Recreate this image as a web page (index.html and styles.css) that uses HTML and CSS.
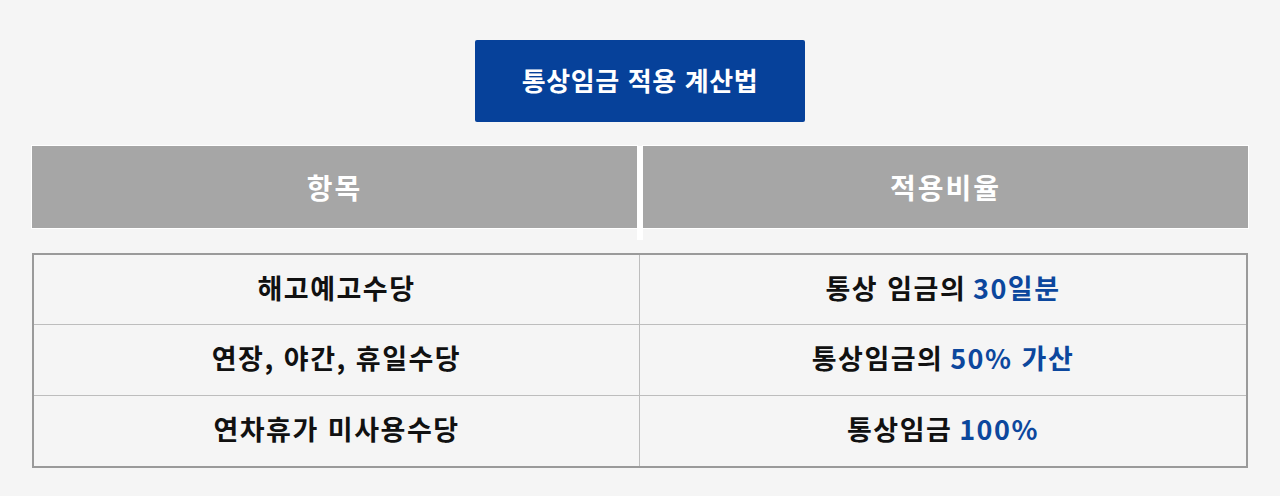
FILE: index.html
```html
<!DOCTYPE html>
<html lang="ko">
<head>
<meta charset="utf-8">
<link rel="stylesheet" href="styles.css">
</head>
<body>
<div class="page">
  <div class="title">통상임금 적용 계산법</div>
  <div class="head">
    <div class="head-cell">항목</div>
    <div class="head-sep"></div>
    <div class="head-cell">적용비율</div>
  </div>
  <div class="table">
    <div class="row">
      <div class="cell">해고예고수당</div>
      <div class="cell">통상 임금의 <span class="hl">30일분</span></div>
    </div>
    <div class="row">
      <div class="cell">연장, 야간, 휴일수당</div>
      <div class="cell">통상임금의 <span class="hl">50% 가산</span></div>
    </div>
    <div class="row">
      <div class="cell">연차휴가 미사용수당</div>
      <div class="cell">통상임금 <span class="hl">100%</span></div>
    </div>
  </div>
</div>
</body>
</html>
```
FILE: styles.css
```css
html, body {
  margin: 0;
  padding: 0;
  background: #f5f5f5;
}
body {
  font-family: "Noto Sans CJK KR", "Noto Sans", sans-serif;
  color: #111;
}
.page {
  padding: 40px 32px 0 32px;
}
.title {
  width: 330px;
  height: 82px;
  box-sizing: border-box;
  padding-bottom: 3px;
  margin: 0 auto;
  background: #06419a;
  border-radius: 2px;
  color: #fff;
  font-size: 26px;
  font-weight: 700;
  display: flex;
  align-items: center;
  justify-content: center;
  letter-spacing: 0.6px;
}
.head {
  margin-top: 24px;
  display: grid;
  grid-template-columns: 605px 6px 1fr;
  align-items: start;
}
.head-cell {
  height: 82px;
  background: #a6a6a6;
  color: #fff;
  font-size: 28px;
  font-weight: 700;
  letter-spacing: 2px;
  display: flex;
  align-items: center;
  justify-content: center;
  box-shadow: 0 0 0 1px #fff;
}
.head-sep {
  height: 94px;
  background: #fff;
}
.table {
  margin-top: 13px;
  border: 2px solid #9a9a9a;
}
.row {
  display: grid;
  grid-template-columns: 605px 1fr;
  height: 70px;
  border-top: 1px solid #bdbdbd;
}
.row:first-child {
  border-top: 0;
  height: 69px;
}
.cell {
  display: flex;
  align-items: center;
  justify-content: center;
  box-sizing: border-box;
  padding-bottom: 5px;
  font-size: 27px;
  font-weight: 700;
  letter-spacing: 1.5px;
}
.cell + .cell {
  border-left: 1px solid #bdbdbd;
}
.hl {
  color: #0c479d;
  margin-left: 0.25em;
}
```
